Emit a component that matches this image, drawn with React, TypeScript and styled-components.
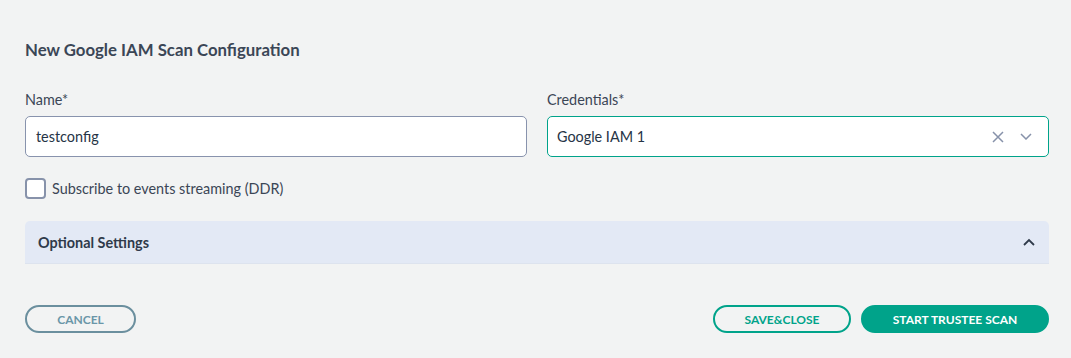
import React from 'react';
import styled, { createGlobalStyle } from 'styled-components';

const palette = {
  bg: '#f2f3f3',
  text: '#3b4656',
  inputText: '#263446',
  border: '#8893ad',
  teal: '#00a38a',
  panel: '#e3e9f5',
  cancel: '#6b8f9e',
  icon: '#8792aa',
};

const GlobalStyle = createGlobalStyle`
  body {
    margin: 0;
    background: ${palette.bg};
    font-family: Lato, 'Open Sans', sans-serif;
  }
`;

const App = () => {
  return (
    <>
      <GlobalStyle />
      <Container>
        <Title>New Google IAM Scan Configuration</Title>

        <FieldRow>
          <Field>
            <Label>Name*</Label>
            <InputBox>testconfig</InputBox>
          </Field>
          <Field>
            <Label>Credentials*</Label>
            <InputBox $focused>
              <span>Google IAM 1</span>
              <Icons>
                <svg width='12' height='12' viewBox='0 0 12 12'>
                  <path d='M1 1 L11 11 M11 1 L1 11' stroke={palette.icon} strokeWidth='1.5' fill='none' />
                </svg>
                <svg width='12' height='7' viewBox='0 0 12 7'>
                  <path d='M1 1 L6 6 L11 1' stroke={palette.icon} strokeWidth='1.5' fill='none' />
                </svg>
              </Icons>
            </InputBox>
          </Field>
        </FieldRow>

        <CheckRow>
          <CheckBox />
          <CheckLabel>Subscribe to events streaming (DDR)</CheckLabel>
        </CheckRow>

        <Accordion>
          <span>Optional Settings</span>
          <svg width='12' height='8' viewBox='0 0 12 8'>
            <path d='M1 7 L6 2 L11 7' stroke='#2f3a4a' strokeWidth='1.8' fill='none' />
          </svg>
        </Accordion>

        <Footer>
          <Button $variant='cancel' $width={111}>CANCEL</Button>
          <Actions>
            <Button $variant='outline' $width={138}>SAVE&amp;CLOSE</Button>
            <Button $variant='primary' $width={188}>START TRUSTEE SCAN</Button>
          </Actions>
        </Footer>
      </Container>
    </>
  );
};

const Container = styled.div`
  width: 1024px;
  padding: 40px 22px 0 25px;
  color: ${palette.text};
`;

const Title = styled.h1`
  margin: 0;
  font-size: 16.8px;
  font-weight: 700;
  line-height: 20px;
  color: ${palette.text};
`;

const FieldRow = styled.div`
  display: grid;
  grid-template-columns: 502px 502px;
  gap: 20px;
  margin-top: 31px;
`;

const Field = styled.div`
  display: flex;
  flex-direction: column;
  gap: 7px;
`;

const Label = styled.label`
  font-size: 14.4px;
  line-height: 18px;
  color: ${palette.text};
`;

const InputBox = styled.div<{ $focused?: boolean }>`
  display: flex;
  align-items: center;
  justify-content: space-between;
  box-sizing: border-box;
  height: 41px;
  padding: 0 ${(p) => (p.$focused ? '16px' : '10px')} 0 ${(p) => (p.$focused ? '9px' : '10px')};
  background: #ffffff;
  border: 1px solid ${(p) => (p.$focused ? palette.teal : palette.border)};
  border-radius: 5px;
  font-size: 14.4px;
  color: ${palette.inputText};
`;

const Icons = styled.div`
  display: flex;
  align-items: center;
  gap: 16px;
`;

const CheckRow = styled.div`
  display: flex;
  align-items: center;
  gap: 6px;
  margin-top: 21px;
`;

const CheckBox = styled.div`
  box-sizing: border-box;
  width: 21px;
  height: 21px;
  background: #ffffff;
  border: 2px solid ${palette.icon};
  border-radius: 4px;
`;

const CheckLabel = styled.span`
  font-size: 14.4px;
  color: ${palette.text};
`;

const Accordion = styled.div`
  display: flex;
  align-items: center;
  justify-content: space-between;
  box-sizing: border-box;
  height: 43px;
  margin-top: 22px;
  padding: 0 14px 0 13px;
  background: ${palette.panel};
  border-radius: 5px 5px 0 0;
  border-bottom: 1px solid #dde3ee;
  font-size: 14.4px;
  font-weight: 700;
  color: #2f3a4a;
`;

const Footer = styled.div`
  display: flex;
  justify-content: space-between;
  align-items: center;
  margin-top: 41px;
`;

const Actions = styled.div`
  display: flex;
  gap: 10px;
`;

const Button = styled.button<{ $variant: 'cancel' | 'outline' | 'primary'; $width: number }>`
  box-sizing: border-box;
  width: ${(p) => p.$width}px;
  height: 28px;
  border-radius: 14px;
  font-family: Lato, sans-serif;
  font-size: 12px;
  font-weight: 700;
  cursor: pointer;
  border: 2px solid
    ${(p) => (p.$variant === 'cancel' ? palette.cancel : palette.teal)};
  background: ${(p) => (p.$variant === 'primary' ? palette.teal : 'transparent')};
  color: ${(p) =>
    p.$variant === 'primary' ? '#ffffff' : p.$variant === 'cancel' ? '#6a96a8' : palette.teal};
`;

export default App;
